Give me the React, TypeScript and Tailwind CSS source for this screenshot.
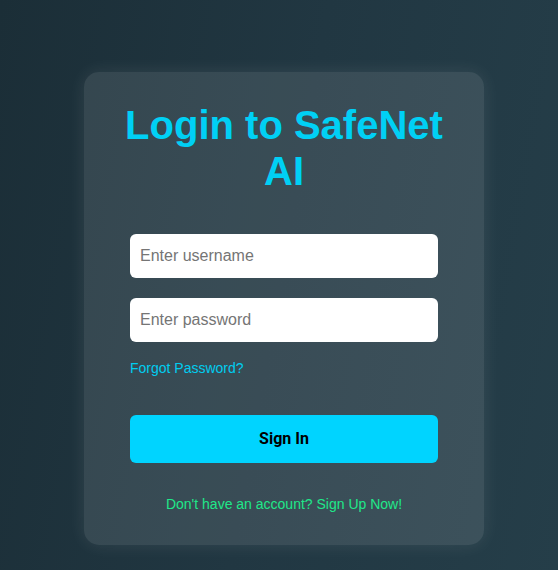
import React from "react";

export default function App() {
  return (
    <div className="min-h-screen w-full bg-[linear-gradient(100deg,#1b2e37_0%,#213742_50%,#253e49_100%)] flex justify-center pl-[10px] pt-[72px] pb-[25px] font-['Liberation_Sans',Arial,sans-serif]">
      <div className="w-[400px] h-[473px] rounded-[15px] bg-[rgba(255,255,255,0.11)] shadow-[0_0_18px_rgba(255,255,255,0.09)] px-[40px] pt-[30px] flex flex-col">
        <h1 className="text-center font-bold text-[40px] leading-[46px] text-[#00d0f5]">
          Login to SafeNet AI
        </h1>
        <div className="px-[6px] flex flex-col">
          <input
            type="text"
            placeholder="Enter username"
            className="mt-[40px] w-full h-[44px] rounded-[6px] bg-white px-[10px] text-[16px] text-black placeholder:text-[#757575] outline-none"
          />
          <input
            type="password"
            placeholder="Enter password"
            className="mt-[20px] w-full h-[44px] rounded-[6px] bg-white px-[10px] text-[16px] text-black placeholder:text-[#757575] outline-none"
          />
          <a href="#" className="mt-[18px] block text-[14px] leading-[16px] text-[#00cdf0]">
            Forgot Password?
          </a>
          <button className="mt-[39px] w-full h-[48px] rounded-[6px] bg-[#00d4ff] text-black font-bold text-[16px] font-['Roboto',sans-serif]">
            Sign In
          </button>
          <p className="mt-[33px] text-center text-[14px] leading-[16px] text-[#1fe889]">
            Don't have an account? Sign Up Now!
          </p>
        </div>
      </div>
    </div>
  );
}
